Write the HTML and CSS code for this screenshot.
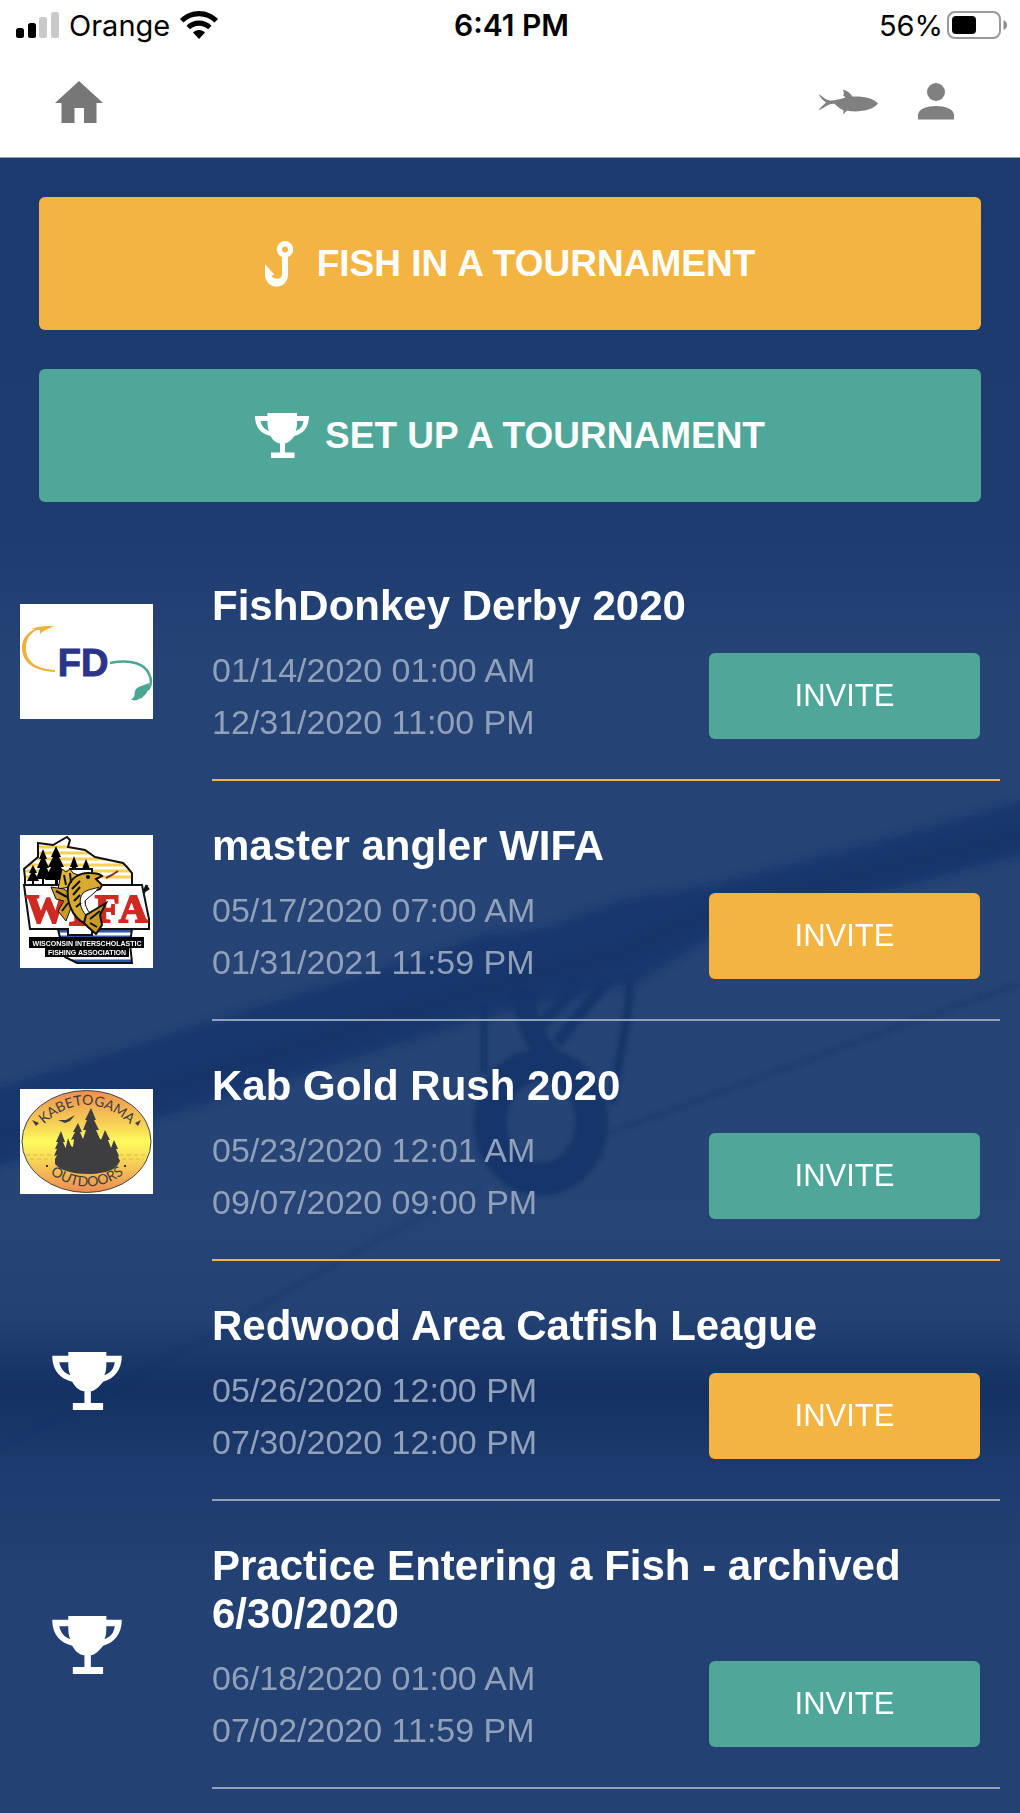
FILE: index.html
```
<!DOCTYPE html>
<html lang="en">

<head>
    <meta charset="UTF-8">
    <meta name="viewport" content="width=device-width, initial-scale=1.0">
    <title>Tournaments</title>
    <link rel="stylesheet" href="styles.css">
</head>

<body>
    <svg width="0" height="0" class="sprite" aria-hidden="true">
        <symbol id="trophy" viewBox="0 0 54 45">
            <path fill="#fff" fill-rule="evenodd" d="M12.500 0H42V3H54C54 14 48 21 39.500 23C36 27.500 33 30 30 30.500V39.500H39.500V45H16V39.500H25V30.500C21 30 18 27.500 15.500 23C6 21 0 14 0 3H12.500ZM5.500 8C6.500 13 9.500 16.500 14 18C12.500 15 12.500 12 12.500 8ZM42 8C42 12 42 15 40.500 18C45 16.500 48 13 48.500 8Z" />
        </symbol>
    </svg>

    <header>
        <div class="status">
            <div class="status_left">
                <svg width="43" height="27" viewBox="0 0 43 27">
                    <rect x="0" y="16" width="8" height="10" rx="2.500" />
                    <rect x="12" y="11" width="8" height="15" rx="2.500" />
                    <rect x="23" y="5" width="8" height="21" rx="2.500" fill="#c9c9c9" />
                    <rect x="35" y="0" width="8" height="26" rx="2.500" fill="#c9c9c9" />
                </svg>
                <span>Orange</span>
                <svg width="38" height="28" viewBox="0 0 38 28">
                    <path d="M19 0C26.500 0 33 3 38 8L34.500 11.500C30 7.500 25 5.300 19 5.300S8 7.500 3.500 11.500L0 8C5 3 11.500 0 19 0Z" />
                    <path d="M19 9.500C24 9.500 28.500 11.500 31.500 14.700L28 18.200C25.500 16 22.500 14.800 19 14.800S12.500 16 10 18.200L6.500 14.700C9.500 11.500 14 9.500 19 9.500Z" />
                    <path d="M19 19C21.500 19 23.500 20 25 21.600L19 28L13 21.600C14.500 20 16.500 19 19 19Z" />
                </svg>
            </div>
            <div class="status_time">6:41 PM</div>
            <div class="status_right">
                <span>56%</span>
                <svg width="60" height="28" viewBox="0 0 60 28">
                    <rect x="1" y="1" width="52" height="26" rx="7" fill="none" stroke="#9a9a9a" stroke-width="2" />
                    <rect x="5" y="5" width="24" height="18" rx="4" />
                    <path d="M56.500 9C59 10 60 12 60 14S59 18 56.500 19Z" fill="#8c8c8c" />
                </svg>
            </div>
        </div>
        <nav>
            <a href="#" aria-label="Home">
                <svg width="48" height="42" viewBox="0 0 48 42" fill="#777">
                    <path d="M24 0L48 22H41.500V42H29V27H19.500V42H6.500V22H0Z" />
                </svg>
            </a>
            <div class="nav_right">
                <a href="#" aria-label="My fish">
                    <svg width="60" height="26" viewBox="0 0 60 26" fill="#808080">
                        <path d="M1 5C5 8 8 11 12 11.500C17 12 21 10 27 8.800C27 7.500 26 6.500 25 6.500C26.500 5 26 2.500 24.500 .500C29 1.500 32 4 34.500 7.500C46 7 56 9.500 60 14.500C56 20 46 23 33 22.300C30 21.500 28.500 21.500 27.500 23L25.500 25.500C25 23 26 22 25 21C21 19.500 19 17 16.500 14.800C12 14 7 18 .500 21.500C2 18 6 16 8 13.500C5 11 2 9 1 5Z" />
                    </svg>
                </a>
                <a href="#" aria-label="Profile">
                    <svg width="36" height="37" viewBox="0 0 36 37" fill="#808080">
                        <circle cx="18" cy="9" r="9" />
                        <path d="M0 36.500V32C0 26 9 23 18 23S36 26 36 32V36.500Z" />
                    </svg>
                </a>
            </div>
        </nav>
    </header>

    <main>
        <!-- fishing rod behind the list -->
        <svg class="rod" viewBox="0 0 1020 1655" preserveAspectRatio="xMidYMin slice" aria-hidden="true">
            <defs>
                <filter id="soft" x="-10%" y="-10%" width="120%" height="120%">
                    <feGaussianBlur stdDeviation="4" />
                </filter>
                <filter id="soft2" x="-10%" y="-10%" width="120%" height="120%">
                    <feGaussianBlur stdDeviation="2" />
                </filter>
            </defs>
            <path d="M-20 936L260 848L390 809L480 778L546 770L625 741L709 728L898 678L1040 638V692L709 780L638 824L520 850L468 864L260 930L-20 1014Z" fill="#17366d" opacity=".85" filter="url(#soft)" />
            <path d="M-20 985L260 900L468 835L620 795L709 755L1040 672" fill="none" stroke="#15315f" stroke-width="16" opacity=".35" filter="url(#soft)" />
            <g fill="none" stroke="#19366a" filter="url(#soft2)">
                <ellipse cx="541" cy="964" rx="51" ry="57" stroke-width="32" />
                <path d="M484 850V915" stroke-width="7" />
                <path d="M524 835C526 870 540 890 562 915" stroke-width="22" />
                <path d="M580 825L540 868M604 825L557 885" stroke-width="11" />
                <path d="M630 820C630 860 620 890 612 945" stroke-width="8" />
                <path d="M608 975C720 935 850 885 1030 822" stroke-width="3" opacity=".7" />
                <path d="M480 1030C350 1090 200 1190 0 1290" stroke-width="3" opacity=".3" />
            </g>
        </svg>

        <div class="actions">
            <button class="big big_fish orange">
                <svg width="28" height="46" viewBox="0 0 28 46">
                    <path fill="#fff" fill-rule="evenodd" d="M20 0A8.300 8.300 0 0 1 23 16V34A11.500 11.500 0 0 1 0 34V23L9.500 34H6.500A5.500 5.500 0 0 0 17 34V16A8.300 8.300 0 0 1 20 0ZM20 5.500A3 3 0 1 0 20 11.500A3 3 0 1 0 20 5.500Z" />
                </svg>
                FISH IN A TOURNAMENT
            </button>
            <button class="big green">
                <svg width="54" height="45"><use href="#trophy" /></svg>
                SET UP A TOURNAMENT
            </button>
        </div>

        <ul class="list">
            <li>
                <div class="thumb">
                    <svg width="133" height="115" viewBox="0 0 133 115">
                        <rect width="133" height="115" fill="#fff" />
                        <path d="M33 22C14 22 2 30 2 44C2 59 15 67 35 68V66C17 65 6 58 6 44C6 31 14 26 24 24Z" fill="#efb03c" />
                        <path d="M34 22C28 25 24 26 20 30L20 26L12 25C18 22 26 22 34 22Z" fill="#efb03c" />
                        <text x="63" y="72" class="fd">FD</text>
                        <path d="M90 59C112 55 125 60 129 70C132 76 131 82 128 86" fill="none" stroke="#4ba693" stroke-width="2.500" />
                        <path d="M129 79C129 86 127 89 124 92C122 93 121 96 121 94L117 96C115 97 112 96 111 96C116 92 114 90 115 87C117 82 123 82 129 79Z" fill="#4ba693" />
                    </svg>
                </div>
                <div class="info line_orange">
                    <h2>FishDonkey Derby 2020</h2>
                    <div class="bottom">
                        <div class="dates">01/14/2020 01:00 AM<br>12/31/2020 11:00 PM</div>
                        <button class="invite green">INVITE</button>
                    </div>
                </div>
            </li>
            <li>
                <div class="thumb">
                    <svg width="133" height="133" viewBox="0 0 133 133">
                        <defs>
                            <clipPath id="state">
                                <path d="M18 8L33 10L47 2L50 5L48 12L65 15L75 22L103 28L107 32L112 38V94L110 108L112 128H57L45 122L40 103L38 94L8 75L5 55V43L4 34L18 22Z" />
                            </clipPath>
                        </defs>
                        <rect width="133" height="133" fill="#fff" />
                        <g clip-path="url(#state)">
                            <path d="M0 12H130M0 18H130M0 24H130M0 30H130M0 36H130M0 42H130" stroke="#f5d158" stroke-width="3" />
                            <path d="M0 96H130M0 102H130M0 108H130M0 126H130" stroke="#2a55b0" stroke-width="3" />
                        </g>
                        <path d="M18 8L33 10L47 2L50 5L48 12L65 15L75 22L103 28L107 32L112 38V94L110 108L112 128H57L45 122L40 103L38 94L8 75L5 55V43L4 34L18 22Z" fill="none" stroke="#111" stroke-width="2" />
                        <path d="M13 30L17 38L15 38L19 46H14V50H12V46H7L11 38L9 38ZM23 14L27 24L25 24L29 33L27 33L31 44H24V50H22V44H16L20 33L17 33L21 24L19 24ZM36 11L41 22L39 22L44 32L41 32L48 45H38V50H35V45H25L31 32L28 32L33 22L31 22ZM54 21L58 32L56 32L61 44H48L52 32L50 32ZM66 24L70 34L68 34L72 44H60L64 34L62 34Z" />
                        <path d="M117 72L127 50M121 58L129 53" stroke="#111" stroke-width="3" />
                        <path d="M4 50H50V34H72V50H122L129 84V94H72V100H48V94H10Z" fill="#fff" stroke="#111" stroke-width="2" />
                        <g class="wifa">
                            <text x="6" y="87" font-size="40">W</text>
                            <text x="48" y="90" font-size="62">I</text>
                            <text x="75" y="87" font-size="40">F</text>
                            <text x="99" y="87" font-size="40">A</text>
                        </g>
                        <!-- walleye -->
                        <path d="M38 54L42 34L46 37L50 34L53 38L58 40L60 48L50 52Z" fill="#e2b534" stroke="#111" />
                        <path d="M31 52L44 54L52 60V70L46 86L38 76L44 66L36 64Z" fill="#c99a26" stroke="#111" />
                        <path d="M48 52C51 43 60 37 70 38C76 38 80 39 82 41L76 44L82 50L80 54C74 56 68 57 64 61C62 68 66 76 72 82L64 88C52 82 46 66 48 52Z" fill="#d8aa2f" stroke="#111" stroke-width="2" />
                        <path d="M63 58C68 54 74 54 79 52C76 58 68 62 65 66C65 70 67 75 70 78L66 80C60 74 58 64 63 58Z" fill="#fff" stroke="#111" />
                        <path d="M66 80L86 68L80 80L82 90L76 99L68 92L64 88Z" fill="#c99a26" stroke="#111" stroke-width="2" />
                        <path d="M52 54L60 46M53 60L60 52M54 66L60 60M56 72L61 68M70 84L80 76M70 88L77 92M44 40L46 50M50 38L51 48M36 56L47 62M42 76L48 68" stroke="#111" stroke-width="2" />
                        <circle cx="68" cy="42" r="2" />
                        <path d="M86 43L92 40L98 36" fill="none" stroke="#8a2a22" stroke-width="2" />
                        <path d="M9 102H124V113H109V122H25V113H9Z" />
                        <text x="67" y="111" class="wifa_small">WISCONSIN INTERSCHOLASTIC</text>
                        <text x="67" y="120" class="wifa_small">FISHING ASSOCIATION</text>
                    </svg>
                </div>
                <div class="info">
                    <h2>master angler WIFA</h2>
                    <div class="bottom">
                        <div class="dates">05/17/2020 07:00 AM<br>01/31/2021 11:59 PM</div>
                        <button class="invite orange">INVITE</button>
                    </div>
                </div>
            </li>
            <li>
                <div class="thumb">
                    <svg width="133" height="105" viewBox="0 0 133 105">
                        <defs>
                            <linearGradient id="sun" x1="0" y1="0" x2="0" y2="1">
                                <stop offset="0" stop-color="#ef8f50" />
                                <stop offset=".35" stop-color="#f8d556" />
                                <stop offset=".5" stop-color="#fdfb5c" />
                                <stop offset=".65" stop-color="#f9de58" />
                                <stop offset="1" stop-color="#ee8a50" />
                            </linearGradient>
                            <path id="arc_top" d="M22 37Q66 -5 112 37" />
                            <path id="arc_bottom" d="M26 82Q67 113 108 82" />
                        </defs>
                        <rect width="133" height="105" fill="#fff" />
                        <ellipse cx="66.500" cy="52.500" rx="64.500" ry="51" fill="url(#sun)" stroke="#444" stroke-width="1" />
                        <path d="M6 66H34M10 70H32M100 66H128M102 70H124" stroke="#d9bb45" stroke-dasharray="4 3" />
                        <path d="M35 75V70L37 66L34 67L37 60L35 60L38 53L36 53L41 42L45 53L43 53L46 60L45 62L48 49L51 57L53 58L54 50L51 51L55 43L53 43L58 34L62 43L60 43L63 50L66 41L63 41L67 31L65 31L71 19L76 31L74 31L79 41L76 41L80 50L83 51L81 51L85 41L90 51L88 51L91 59L94 51L98 60L96 60L99 67L98 68L100 72L97 77C88 88 45 88 35 75Z" fill="#3e3d40" />
                        <path d="M38 31L46 31L55 26L50 32L45 34Z" fill="#3e3d40" />
                        <path d="M12 31L19 34L16 37ZM121 31L115 34L118 37Z" fill="#3e3d40" />
                        <circle cx="27" cy="77" r="1" />
                        <circle cx="105" cy="77" r="1" />
                        <text class="kab"><textPath href="#arc_top" startOffset="50%">KABETOGAMA</textPath></text>
                        <text class="kab"><textPath href="#arc_bottom" startOffset="50%">OUTDOORS</textPath></text>
                    </svg>
                </div>
                <div class="info line_orange">
                    <h2>Kab Gold Rush 2020</h2>
                    <div class="bottom">
                        <div class="dates">05/23/2020 12:01 AM<br>09/07/2020 09:00 PM</div>
                        <button class="invite green">INVITE</button>
                    </div>
                </div>
            </li>
            <li>
                <div class="thumb">
                    <svg width="70" height="58"><use href="#trophy" /></svg>
                </div>
                <div class="info">
                    <h2>Redwood Area Catfish League</h2>
                    <div class="bottom">
                        <div class="dates">05/26/2020 12:00 PM<br>07/30/2020 12:00 PM</div>
                        <button class="invite orange">INVITE</button>
                    </div>
                </div>
            </li>
            <li>
                <div class="thumb">
                    <svg width="70" height="58"><use href="#trophy" /></svg>
                </div>
                <div class="info">
                    <h2>Practice Entering a Fish - archived 6/30/2020</h2>
                    <div class="bottom">
                        <div class="dates">06/18/2020 01:00 AM<br>07/02/2020 11:59 PM</div>
                        <button class="invite green">INVITE</button>
                    </div>
                </div>
            </li>
        </ul>
    </main>
</body>

</html>
```
FILE: styles.css
```
* {
    box-sizing: border-box;
}

body {
    margin: 0;
    min-height: 100vh;
    display: flex;
    flex-direction: column;
    font-family: "Liberation Sans", Arial, sans-serif;
    color: white;
    background-color: #1f3d72;
}

svg {
    display: block;
    flex-shrink: 0;
}

.sprite {
    position: absolute;
}

header {
    background-color: white;
    color: black;
    border-bottom: 1px solid #8f9fba;
}

.status {
    display: grid;
    grid-template-columns: 1fr auto 1fr;
    align-items: center;
    height: 50px;
    padding: 0 13px 0 16px;
    font-family: Inter, sans-serif;
    font-size: 29px;
}

.status_left,
.status_right {
    display: flex;
    align-items: center;
    gap: 10px;
}

.status_right {
    justify-content: flex-end;
    gap: 4px;
}

.status_time {
    font-size: 30px;
    font-weight: 600;
}

nav {
    display: flex;
    justify-content: space-between;
    align-items: center;
    height: 107px;
    padding: 0 66px 4px 55px;
}

.nav_right {
    display: flex;
    align-items: center;
    gap: 40px;
}

main {
    position: relative;
    flex: 1;
    overflow: hidden;
    padding-bottom: 24px;
    background: linear-gradient(#1d3a6f 0, #1e3c70 380px, #254375 500px, #264475 1080px, #234173 1160px, #153163 1230px, #1d3b6e 1310px, #234173 1420px, #234172 100%);
}

.rod {
    position: absolute;
    top: 0;
    left: 0;
    width: 100%;
    height: 100%;
}

.actions {
    position: relative;
    display: flex;
    flex-direction: column;
    gap: 39px;
    padding: 39px;
}

button {
    border: none;
    border-radius: 6px;
    color: white;
    font-family: inherit;
    cursor: pointer;
}

.orange {
    background-color: #f3b441;
}

.green {
    background-color: #4ea798;
}

.big {
    display: flex;
    justify-content: center;
    align-items: center;
    gap: 16px;
    height: 133px;
    font-size: 37px;
    font-weight: bold;
}

.big_fish {
    gap: 24px;
}

.list {
    position: relative;
    margin: 0;
    padding: 0 20px;
    list-style: none;
}

.list li {
    display: flex;
    align-items: center;
    gap: 59px;
}

.thumb {
    display: flex;
    justify-content: center;
    width: 133px;
    flex-shrink: 0;
}

.info {
    flex: 1;
    padding: 41px 0 31px;
    border-bottom: 2px solid #93a1ba;
}

.line_orange {
    border-bottom-color: #f3b441;
}

.info h2 {
    margin: 0 0 14px;
    font-size: 42px;
    line-height: 48px;
}

.bottom {
    display: flex;
    justify-content: space-between;
    align-items: center;
    padding-right: 20px;
}

.dates {
    font-size: 34px;
    line-height: 52px;
    color: #92a1ba;
}

.invite {
    width: 271px;
    height: 86px;
    font-size: 31px;
}

.fd {
    font-family: "Liberation Sans Narrow", "Liberation Sans", sans-serif;
    font-size: 38px;
    font-weight: bold;
    text-anchor: middle;
    fill: #2b3488;
    stroke: #2b3488;
    stroke-width: 1px;
}

.wifa {
    font-family: "Liberation Serif", serif;
    font-weight: bold;
    fill: #cf2a22;
    stroke: #cf2a22;
    stroke-width: 2px;
}

.wifa_small {
    font-size: 7px;
    font-weight: bold;
    text-anchor: middle;
    fill: white;
}

.kab {
    font-family: Lato, sans-serif;
    font-size: 14px;
    text-anchor: middle;
    fill: #3e3d40;
}
```
